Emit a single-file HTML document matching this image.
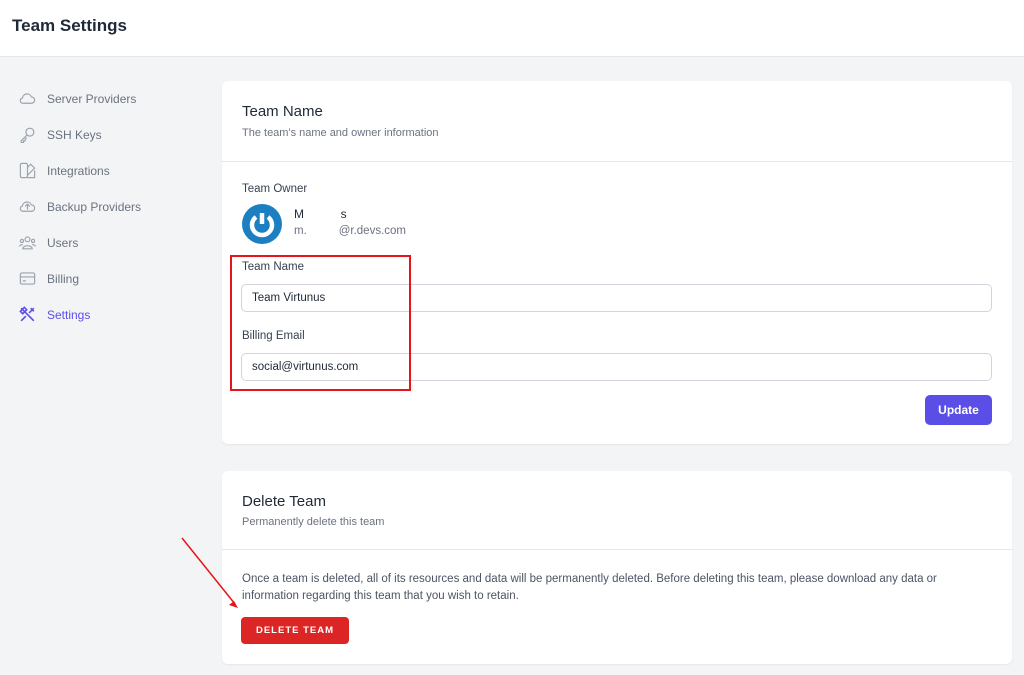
<!DOCTYPE html>
<html><head><meta charset="utf-8"><style>
*{box-sizing:border-box;margin:0;padding:0}
body{width:1024px;height:675px;overflow:hidden;background:#f3f4f6;font-family:"Liberation Sans",sans-serif;color:#374151;position:relative}
.top{position:absolute;left:0;top:0;width:1024px;height:57px;background:#fff;border-bottom:1px solid #e5e7eb}
.top h1{position:absolute;left:12px;top:16px;font-size:17px;font-weight:bold;color:#1f2937}
.nav{position:absolute;left:18px;font-size:12px;color:#6b7280;display:flex;align-items:center}
.nav svg{width:19px;height:19px;margin-right:10px;fill:none;stroke:#9ca3af;stroke-width:1.5}
.card{position:absolute;left:222px;width:790px;background:#fff;border-radius:6px;box-shadow:0 1px 2px rgba(0,0,0,.06)}
.t{position:absolute;left:20px;font-size:15px;color:#1f2937}
.s{position:absolute;left:20px;font-size:11px;color:#6b7280}
.hr{position:absolute;left:0;right:0;height:1px;background:#e5e7eb}
.lbl{position:absolute;left:20px;font-size:11.5px;color:#374151}
.inp{position:absolute;left:19px;width:751px;height:28px;border:1px solid #d1d5db;border-radius:5px;font-size:11.5px;padding:7px 10px;color:#1f2937}
</style></head><body>
<div class="top"><h1>Team Settings</h1></div>

<div class="nav" style="top:89px"><svg viewBox="0 0 24 24"><path d="M6 18h11a4 4 0 0 0 0-8 6 6 0 0 0-11.5 1.5A3.3 3.3 0 0 0 6 18z"/></svg>Server Providers</div>
<div class="nav" style="top:125px"><svg viewBox="0 0 24 24"><circle cx="15" cy="9" r="5"/><path d="M11 13l-7 7v2h3v-2h2v-2l2-2"/></svg>SSH Keys</div>
<div class="nav" style="top:161px"><svg viewBox="0 0 24 24"><rect x="3" y="3" width="9" height="18" rx="2"/><path d="M12 8l4-4 5 5-9 9M12 21h9V12"/></svg>Integrations</div>
<div class="nav" style="top:197px"><svg viewBox="0 0 24 24"><path d="M6 18h11a4 4 0 0 0 0-8 6 6 0 0 0-11.5 1.5A3.3 3.3 0 0 0 6 18zM12 16v-6M9 12l3-3 3 3"/></svg>Backup Providers</div>
<div class="nav" style="top:233px"><svg viewBox="0 0 24 24"><circle cx="12" cy="8" r="3"/><circle cx="5" cy="10" r="2"/><circle cx="19" cy="10" r="2"/><path d="M6 20a6 4 0 0 1 12 0zM2 17a3 2 0 0 1 4-2M22 17a3 2 0 0 0-4-2"/></svg>Users</div>
<div class="nav" style="top:269px"><svg viewBox="0 0 24 24"><rect x="3" y="5" width="18" height="14" rx="2"/><path d="M3 10h18M6 15h4"/></svg>Billing</div>
<div class="nav" style="top:305px;color:#5b4ee6"><svg viewBox="0 0 24 24" style="stroke:#5b4ee6;stroke-width:2"><path d="M4 4l16 16M3 8l5-5 3 3-5 5zM14 10l6-6M16 4l4 4M4 20l6-6"/></svg>Settings</div>

<div class="card" style="top:81px;height:363px">
<div class="t" style="top:22px">Team Name</div>
<div class="s" style="top:46px">The team's name and owner information</div>
<div class="hr" style="top:80px"></div>
<div class="lbl" style="top:102px">Team Owner</div>
<svg style="position:absolute;left:20px;top:123px" width="40" height="40" viewBox="0 0 40 40"><circle cx="20" cy="20" r="20" fill="#1b7fc1"/><path d="M14 13a10 10 0 1 0 12 0" fill="none" stroke="#fff" stroke-width="4.5"/><path d="M20 9v11" stroke="#fff" stroke-width="4.5"/></svg>
<div style="position:absolute;left:72px;top:126px;font-size:12px;color:#1f2937">M&nbsp;&nbsp;&nbsp;&nbsp;&nbsp;&nbsp;&nbsp;&nbsp;&nbsp;&nbsp;&nbsp;s</div>
<div style="position:absolute;left:72px;top:144px;font-size:11.5px;color:#6b7280">m.&nbsp;&nbsp;&nbsp;&nbsp;&nbsp;&nbsp;&nbsp;&nbsp;&nbsp;&nbsp;@r.devs.com</div>
<div class="lbl" style="top:180px">Team Name</div>
<div class="inp" style="top:203px">Team Virtunus</div>
<div class="lbl" style="top:249px">Billing Email</div>
<div class="inp" style="top:272px">social@virtunus.com</div>
<div style="position:absolute;left:8px;top:174px;width:181px;height:136px;border:2px solid #e8141b"></div>
<div style="position:absolute;left:703px;top:314px;width:67px;height:30px;background:#5b4ee6;border-radius:5px;color:#fff;font-size:12px;font-weight:bold;text-align:center;line-height:30px">Update</div>
</div>

<div class="card" style="top:471px;height:193px">
<div class="t" style="top:22px">Delete Team</div>
<div class="s" style="top:45px">Permanently delete this team</div>
<div class="hr" style="top:78px"></div>
<div style="position:absolute;left:20px;top:100px;width:750px;font-size:11.5px;line-height:17px;color:#4b5563">Once a team is deleted, all of its resources and data will be permanently deleted. Before deleting this team, please download any data or information regarding this team that you wish to retain.</div>
<div style="position:absolute;left:19px;top:146px;width:108px;height:27px;background:#dc2626;border-radius:4px;color:#fff;font-size:9.5px;font-weight:bold;letter-spacing:1px;text-align:center;line-height:27px">DELETE TEAM</div>
</div>

<svg style="position:absolute;left:175px;top:532px" width="70" height="80"><path d="M7 6L60 72" stroke="#e8141b" stroke-width="1.5"/><path d="M63 76l-9-3 5-4z" fill="#e8141b"/></svg>
</body></html>
